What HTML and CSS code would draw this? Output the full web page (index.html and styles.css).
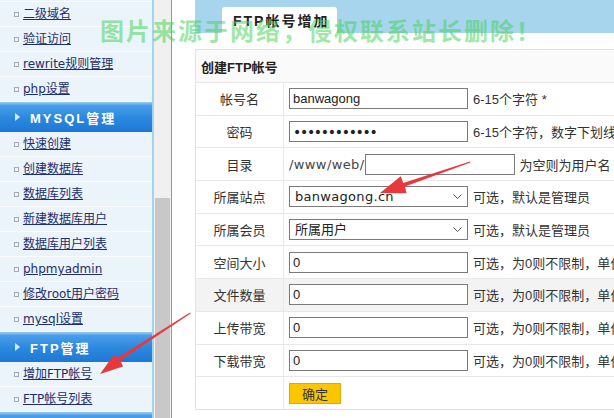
FILE: index.html
```html
<!DOCTYPE html>
<html lang="zh-CN">
<head>
    <meta charset="UTF-8">
    <title>FTP帐号增加</title>
    <link rel="stylesheet" href="styles.css">
</head>
<body>
<div class="page">
    <div class="sidebar">
        <div class="menu-cut"></div>
        <div class="menu-item"><a href="#">二级域名</a></div>
        <div class="menu-item"><a href="#">验证访问</a></div>
        <div class="menu-item"><a href="#">rewrite规则管理</a></div>
        <div class="menu-item"><a href="#">php设置</a></div>
        <div class="menu-title">MYSQL管理</div>
        <div class="menu-item"><a href="#">快速创建</a></div>
        <div class="menu-item"><a href="#">创建数据库</a></div>
        <div class="menu-item"><a href="#">数据库列表</a></div>
        <div class="menu-item"><a href="#">新建数据库用户</a></div>
        <div class="menu-item"><a href="#">数据库用户列表</a></div>
        <div class="menu-item"><a href="#">phpmyadmin</a></div>
        <div class="menu-item"><a href="#">修改root用户密码</a></div>
        <div class="menu-item"><a href="#">mysql设置</a></div>
        <div class="menu-title">FTP管理</div>
        <div class="menu-item"><a href="#">增加FTP帐号</a></div>
        <div class="menu-item"><a href="#">FTP帐号列表</a></div>
        <div class="menu-title"></div>
    </div>

    <div class="scrollbar"><div class="thumb"></div></div>

    <div class="main">
        <div class="tabbar">
            <div class="tab">FTP帐号增加</div>
        </div>

        <div class="panel">
            <table class="form">
                <tr class="head">
                    <th colspan="2">创建FTP帐号</th>
                </tr>
                <tr>
                    <td class="label">帐号名</td>
                    <td class="field"><input class="input" type="text" value="banwagong"><span class="hint">6-15个字符 *</span></td>
                </tr>
                <tr>
                    <td class="label">密码</td>
                    <td class="field"><input class="input pass" type="password" value="banwagong123"><span class="hint">6-15个字符，数字下划线</span></td>
                </tr>
                <tr>
                    <td class="label">目录</td>
                    <td class="field"><span class="path">/www/web/</span><input class="input dir" type="text"><span class="hint">为空则为用户名</span></td>
                </tr>
                <tr>
                    <td class="label">所属站点</td>
                    <td class="field"><span class="select-wrap"><select class="input select wide"><option>banwagong.cn</option></select><svg class="chevron" width="9" height="5" viewBox="0 0 9 5"><polyline points="0.5,0.5 4.5,4.5 8.5,0.5" fill="none" stroke="#555" stroke-width="1"/></svg></span><span class="hint">可选，默认是管理员</span></td>
                </tr>
                <tr>
                    <td class="label">所属会员</td>
                    <td class="field"><span class="select-wrap"><select class="input select"><option>所属用户</option></select><svg class="chevron" width="9" height="5" viewBox="0 0 9 5"><polyline points="0.5,0.5 4.5,4.5 8.5,0.5" fill="none" stroke="#555" stroke-width="1"/></svg></span><span class="hint">可选，默认是管理员</span></td>
                </tr>
                <tr>
                    <td class="label">空间大小</td>
                    <td class="field"><input class="input" type="text" value="0"><span class="hint">可选，为0则不限制，单位M</span></td>
                </tr>
                <tr class="hover">
                    <td class="label">文件数量</td>
                    <td class="field"><input class="input" type="text" value="0"><span class="hint">可选，为0则不限制，单位个</span></td>
                </tr>
                <tr>
                    <td class="label">上传带宽</td>
                    <td class="field"><input class="input" type="text" value="0"><span class="hint">可选，为0则不限制，单位K</span></td>
                </tr>
                <tr>
                    <td class="label">下载带宽</td>
                    <td class="field"><input class="input" type="text" value="0"><span class="hint">可选，为0则不限制，单位K</span></td>
                </tr>
                <tr>
                    <td class="label"></td>
                    <td class="field"><button class="btn">确定</button></td>
                </tr>
            </table>
        </div>
    </div>

    <!-- 水印和标注箭头 -->
    <div class="watermark">图片来源于网络，侵权联系站长删除！</div>
    <svg class="marks" width="614" height="418" viewBox="0 0 614 418">
        <polygon fill="#e8383d" points="470,161.5 470.4,162.6 405,186.6 406.6,193.3 380,193 400.8,176.3 403.2,183" />
        <polygon fill="#e8383d" points="190,312.5 190.6,313.5 120.4,360.6 123,366.6 100,374 113.8,355 118.2,357.5" />
    </svg>
</div>
</body>
</html>
```

FILE: styles.css
```css
body {
    margin: 0;
    font-family: "Liberation Sans", "Noto Sans CJK SC", sans-serif;
    font-size: 13px;
    color: #333;
    background: #fff;
    overflow: hidden;
}

.page {
    position: relative;
    display: flex;
    width: 614px;
    height: 418px;
    overflow: hidden;
}

/* 左侧菜单 */
.sidebar {
    width: 152px;
    flex: none;
    background: #ebf3fb;
    border-right: 2px solid #a3d5f2;
}

.menu-cut {
    height: 1px;
    border-bottom: 1px solid #fafcff;
}

.menu-item {
    height: 25px;
    box-sizing: border-box;
    border-bottom: 1px solid #fafcff;
    display: flex;
    align-items: center;
    padding-left: 14px;
}

.menu-item::before {
    content: "";
    width: 3px;
    height: 3px;
    border: 1px solid #a4abb5;
    margin-right: 4px;
}

.menu-item a {
    font-family: "DejaVu Sans", "Noto Sans CJK SC", sans-serif;
    font-size: 12px;
    line-height: 14px;
    color: #1d2e6c;
    text-decoration: underline;
}

.menu-title {
    height: 30px;
    box-sizing: border-box;
    display: flex;
    align-items: center;
    padding-left: 15px;
    background: linear-gradient(#9acdf5 0, #4a9eea 12%, #2d89df 50%, #1c78d4 100%);
    color: #fff;
    font-weight: bold;
    font-size: 13px;
    letter-spacing: 2px;
}

.menu-title::before {
    content: "";
    border-left: 5px solid #d4e9fb;
    border-top: 4px solid transparent;
    border-bottom: 4px solid transparent;
    margin-right: 10px;
}

/* 框架滚动条 */
.scrollbar {
    width: 17px;
    flex: none;
    background: #f0f0f0;
    border-right: 1px solid #4cb3c3;
}

.scrollbar .thumb {
    margin: 198px 1px 0 1px;
    height: 230px;
    background: #c8c8c8;
}

/* 右侧内容 */
.main {
    flex: 1;
    min-width: 0;
    padding-left: 23px;
    overflow: hidden;
}

.tabbar {
    height: 33px;
    box-sizing: border-box;
    padding: 7px 0 0 27px;
    background: #a8d5ee;
}

.tab {
    width: 115px;
    height: 26px;
    box-sizing: border-box;
    padding-left: 11px;
    background: #fff;
    border-radius: 3px 3px 0 0;
    font-size: 14px;
    font-weight: bold;
    letter-spacing: 2px;
    line-height: 28px;
    color: #222;
}

.panel {
    margin-top: 16px;
    width: 480px;
    border: 1px solid #e3e3e3;
    border-right: none;
}

.form {
    width: 100%;
    border-collapse: collapse;
}

.form td,
.form th {
    padding: 0;
    height: 31.7px;
    border-bottom: 1px solid #e8e8e8;
}

.form tr:last-child td {
    border-bottom: none;
}

.form .head th {
    height: 32px;
    text-align: left;
    padding-left: 5px;
    background: #fafafa;
    font-size: 13px;
    color: #222;
}

.form .label {
    width: 87px;
    text-align: center;
    border-right: 1px solid #e8e8e8;
    color: #333;
}

.form .field {
    padding-left: 5px;
    white-space: nowrap;
}

.form .hover td {
    background: #f3f3f3;
}

.input {
    width: 179px;
    height: 21px;
    box-sizing: border-box;
    margin: 0;
    padding: 0 3px;
    border: 1px solid #7b7b7b;
    border-radius: 0;
    background: #fff;
    font-family: "Liberation Sans", "Noto Sans CJK SC", sans-serif;
    font-size: 13px;
    color: #222;
    vertical-align: middle;
}

.input.pass {
    font-family: "DejaVu Sans", sans-serif;
    font-size: 14px;
    letter-spacing: -1.3px;
}

.input.dir {
    width: 150px;
}

.select-wrap {
    position: relative;
    display: inline-block;
    vertical-align: middle;
}

.select {
    -webkit-appearance: none;
    appearance: none;
    padding: 0 18px 0 5px;
    font-family: "DejaVu Sans", "Noto Sans CJK SC", sans-serif;
    vertical-align: top;
}

.select.wide {
    letter-spacing: 0.3px;
}

.chevron {
    position: absolute;
    right: 6px;
    top: 8px;
    pointer-events: none;
}

.path {
    font-family: "DejaVu Sans", sans-serif;
    font-size: 13px;
    letter-spacing: 0.4px;
    vertical-align: middle;
    color: #444;
}

.hint {
    margin-left: 5px;
    vertical-align: middle;
    color: #333;
}

.btn {
    width: 52px;
    height: 21px;
    margin: 0;
    padding: 0;
    background: #fcc500;
    border: 1px solid #e3a700;
    font-family: "Noto Sans CJK SC", sans-serif;
    font-size: 13px;
    color: #333;
    vertical-align: middle;
}

/* 覆盖层 */
.watermark {
    position: absolute;
    left: 100px;
    top: 14px;
    font-family: "Noto Sans CJK SC", sans-serif;
    font-size: 24px;
    font-weight: bold;
    letter-spacing: 2px;
    line-height: 32px;
    color: rgba(60, 210, 80, 0.5);
    white-space: nowrap;
    pointer-events: none;
}

.marks {
    position: absolute;
    left: 0;
    top: 0;
    pointer-events: none;
}
```
